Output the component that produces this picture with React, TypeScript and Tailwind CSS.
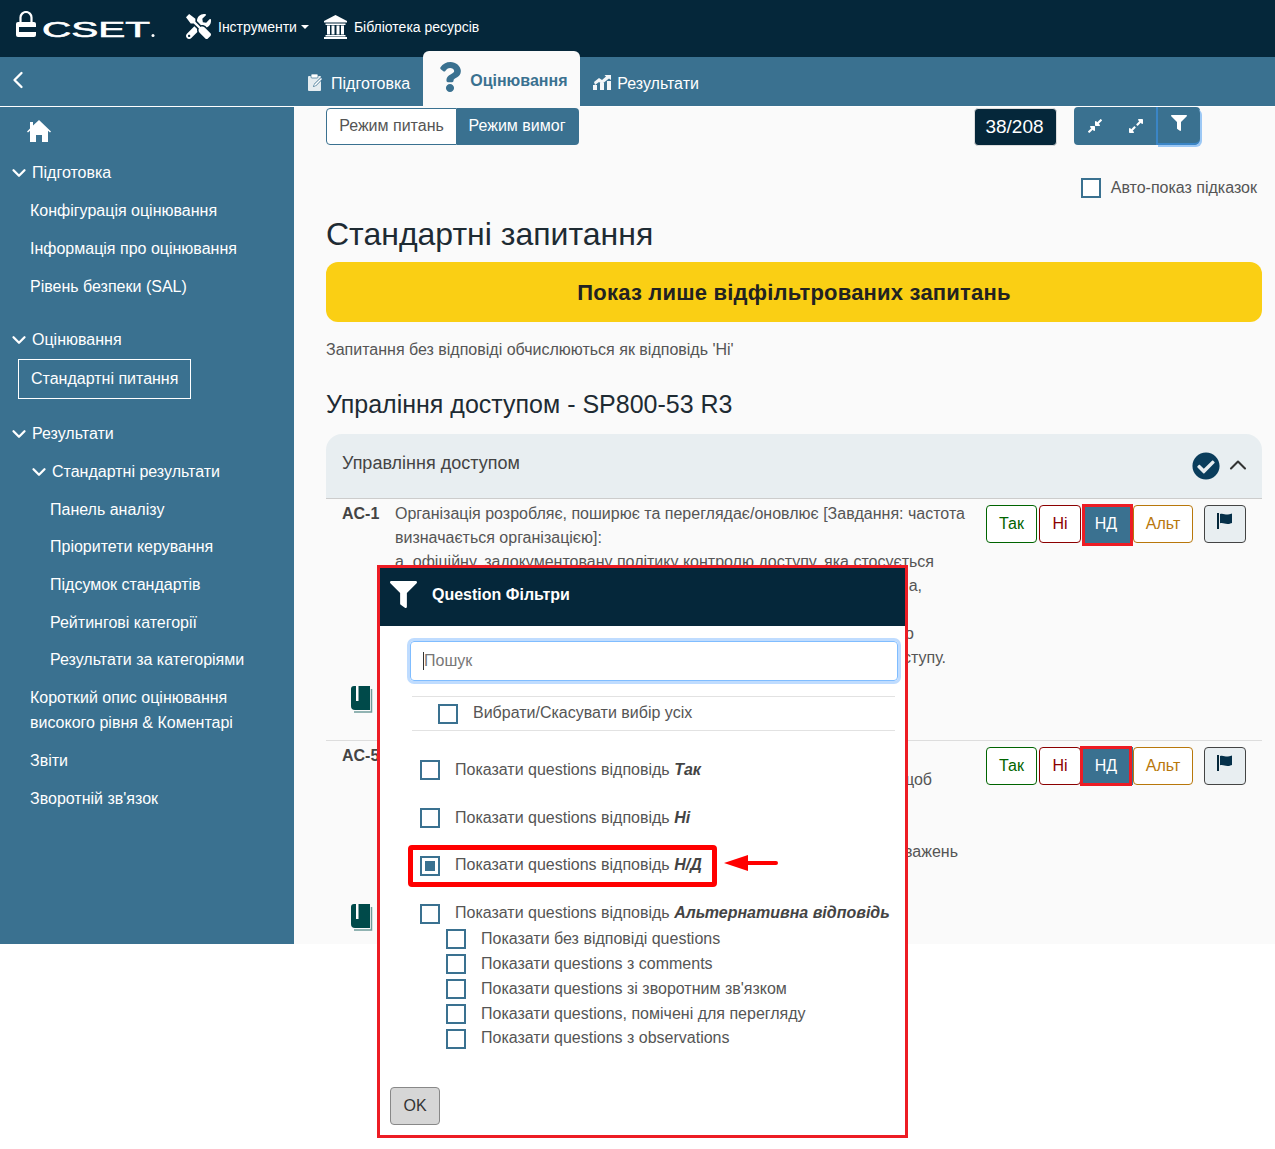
import React from 'react';
import { FaCheckCircle, FaCompressAlt, FaExpandAlt, FaFilter, FaQuestion, FaTools } from 'react-icons/fa';
import { ChevronDown, ChevronLeft, ChevronUp } from 'lucide-react';

const Logo = () => (
  <svg width="146" height="34" viewBox="0 0 146 34" className="shrink-0 mt-[2px]">
    <path d="M5.500 11V6.500a5.500 5.500 0 0 1 11 0V11" fill="none" stroke="#fff" strokeWidth="2.200" />
    <rect x="1" y="11" width="20" height="15" rx="2" fill="#fff" />
    <rect x="4" y="16" width="18" height="5" fill="#05273a" />
    <text x="27" y="26" fontSize="22" fill="#fff" stroke="#fff" strokeWidth="0.6" fontFamily="Liberation Sans" textLength="108" lengthAdjust="spacingAndGlyphs">CSET</text>
    <circle cx="138" cy="24.500" r="1.500" fill="#fff" />
  </svg>
);

const LibraryIcon = () => (
  <svg width="23" height="24" viewBox="0 0 23 24" fill="#fff" className="ml-[15px]">
    <path d="M11.500 0L23 6v1.500H0V6z" />
    <rect x="1.500" y="8.500" width="20" height="1.500" />
    <rect x="3" y="10.500" width="3" height="9" />
    <rect x="7.500" y="10.500" width="3" height="9" />
    <rect x="12.500" y="10.500" width="3" height="9" />
    <rect x="17" y="10.500" width="3" height="9" />
    <rect x="1.500" y="20" width="20" height="1.500" />
    <rect x="0" y="22" width="23" height="2" />
  </svg>
);

const HomeIcon = () => (
  <svg width="24" height="22" viewBox="0 0 24 22" fill="#fff">
    <path d="M12 0L24 11.500l-1 1-2-1.800V22h-6v-7H9v7H3V10.700l-2 1.800-1-1L3 8.500V2h3v3.600z" />
  </svg>
);

const ClipboardIcon = () => (
  <svg width="17" height="18" viewBox="0 0 17 18">
    <rect x="1" y="3" width="13" height="15" rx="1" fill="#e4ecf0" />
    <rect x="4" y="1" width="7" height="4" rx="1" fill="#fff" stroke="#3a7190" strokeWidth="0.7" />
    <path d="M6 14l1-3 7-7 2 2-7 7z" fill="#3a7190" />
    <path d="M7 13l.6-1.800 6.400-6.200 1 1-6.300 6.400z" fill="#fff" />
  </svg>
);

const ResultsIcon = () => (
  <svg width="18" height="16" viewBox="0 0 18 16" fill="#f3f6f8">
    <rect x="0" y="11" width="4" height="5" />
    <rect x="7" y="9" width="4" height="7" />
    <rect x="14" y="7" width="4" height="9" />
    <path d="M1 8l5-4 3 2 4-3.500-1.500-1.500H18v5l-2-1.500-7 5.500-3-2-4 3z" />
  </svg>
);

const BookIcon = () => (
  <svg width="22" height="27" viewBox="0 0 22 27">
    <path d="M20.500 3v23H3" fill="none" stroke="#6f9c9a" strokeWidth="1.500" />
    <path d="M3 0h16v24H4a4 4 0 0 1-4-4V3a3 3 0 0 1 3-3z" fill="#004a4a" />
    <rect x="5" y="0" width="2.500" height="15" fill="#fff" />
  </svg>
);

const FlagIcon = () => (
  <svg width="16" height="16" viewBox="0 0 16 16" className="mb-[6px]">
    <rect x="0" y="0" width="2" height="16" fill="#05273a" />
    <path d="M3 1c3-1 5 .8 8 .5 2-.2 3-.8 4-1v9.500c-1 .3-2.500 1-4 1-3 .2-5-1.500-8-.7z" fill="#05304a" />
  </svg>
);

const Box = ({ checked = false }: { checked?: boolean }) => (
  <span className="w-5 h-5 shrink-0 border-2 border-[#3a7190] bg-white flex items-center justify-center">
    {checked && <span className="w-2.5 h-2.5 bg-[#3a7190]" />}
  </span>
);

const NavItem = ({ label, indent, chevron, height = 'h-[38px]' }: { label: string; indent: string; chevron?: boolean; height?: string }) => (
  <div className={`${height} flex items-center ${indent}`}>
    {chevron && <ChevronDown size={22} strokeWidth={2.500} className="mr-0.5" />}
    <span>{label}</span>
  </div>
);

const Sidebar = () => (
  <aside className="w-[294px] shrink-0 bg-[#3a7190] text-white text-base h-[837px]">
    <div className="h-[47px] pl-[27px] pt-[13px]"><HomeIcon /></div>
    <NavItem label="Підготовка" indent="pl-2" chevron />
    <NavItem label="Конфігурація оцінювання" indent="pl-[30px]" />
    <NavItem label="Інформація про оцінювання" indent="pl-[30px]" />
    <NavItem label="Рівень безпеки (SAL)" indent="pl-[30px]" />
    <div className="mt-[15px]"><NavItem label="Оцінювання" indent="pl-2" chevron /></div>
    <div className="ml-[18px] w-[173px] h-10 border border-white flex items-center pl-3">Стандартні питання</div>
    <div className="mt-[16px]"><NavItem label="Результати" indent="pl-2" chevron /></div>
    <NavItem label="Стандартні результати" indent="pl-[28px]" chevron />
    <NavItem label="Панель аналізу" indent="pl-[50px]" height="h-[37px]" />
    <NavItem label="Пріоритети керування" indent="pl-[50px]" />
    <NavItem label="Підсумок стандартів" indent="pl-[50px]" />
    <NavItem label="Рейтингові категорії" indent="pl-[50px]" height="h-[37px]" />
    <NavItem label="Результати за категоріями" indent="pl-[50px]" />
    <div className="pl-[30px] leading-[25px] pt-[6px] pb-[7px]">Короткий опис оцінювання<br />високого рівня &amp; Коментарі</div>
    <NavItem label="Звіти" indent="pl-[30px]" />
    <NavItem label="Зворотній зв'язок" indent="pl-[30px]" />
  </aside>
);

const Answers = () => (
  <div className="absolute right-[16px] top-[6px] flex items-center text-base">
    <button className="w-[51px] h-[38px] rounded border border-[#006400] text-[#006400] bg-white">Так</button>
    <button className="w-[42px] h-[38px] ml-0.5 rounded border border-[#8b0000] text-[#8b0000] bg-white">Ні</button>
    <span className="relative w-[50px] h-[38px] ml-0.5 pr-1 bg-[#3a7190] text-white flex items-center justify-center">
      НД
    </span>
    <button className="w-[60px] h-[38px] rounded border border-[#b8770b] text-[#b8770b] bg-white">Альт</button>
    <button className="w-[42px] h-[38px] ml-[11px] rounded border border-[#444] bg-[#e8eef1] flex items-center justify-center"><FlagIcon /></button>
  </div>
);

const Check = ({ label, strong, lift = false }: { label: string; strong?: string; lift?: boolean }) => (
  <div className="flex items-center h-5 gap-[15px]">
    <Box />
    <span className={`whitespace-nowrap ${lift ? 'mb-0.5' : ''}`}>{label}{strong && <b className="italic text-[#444]"> {strong}</b>}</span>
  </div>
);

const Modal = () => (
  <div className="absolute left-[377px] top-[565px] w-[531px] h-[573px] border-[3px] border-[#ed1c24] bg-white text-base text-[#555]">
    <div className="h-[58px] bg-[#05273a] flex items-center pl-[10px] text-white font-bold">
      <FaFilter size={27} className="mb-1.5" />
      <span className="ml-[15px] mb-1">Question Фільтри</span>
    </div>
    <div className="mx-[30px] mt-[15px] w-[488px] h-10 rounded border border-[#80bdff] ring-[3px] ring-[#bfdcff] flex items-center pl-3 text-[#777]">
      <span className="w-px h-[18px] bg-[#333]" />Пошук
    </div>
    <div className="ml-[32px] mt-[15px] w-[483px] h-[35px] border-y border-[#e2e2e2] flex items-center pl-[26px]">
      <Box /><span className="ml-[15px] mb-0.5">Вибрати/Скасувати вибір усіх</span>
    </div>
    <div className="ml-[40px] mt-[29px] flex flex-col gap-[28px]">
      <Check label="Показати questions відповідь" strong="Так" />
      <Check label="Показати questions відповідь" strong="Ні" />
      <div className="h-5 flex items-center gap-[15px]">
        <Box checked />
        <span className="whitespace-nowrap mb-0.5">Показати questions відповідь <b className="italic text-[#444]">Н/Д</b></span>
      </div>
      <Check label="Показати questions відповідь" strong="Альтернативна відповідь" lift />
    </div>
    <div className="ml-[66px] mt-[5px] flex flex-col gap-[5px]">
      <Check label="Показати без відповіді questions" />
      <Check label="Показати questions з comments" />
      <Check label="Показати questions зі зворотним зв'язком" />
      <Check label="Показати questions, помічені для перегляду" />
      <Check label="Показати questions з observations" lift />
    </div>
    <button className="ml-[10px] mt-[38px] w-[50px] h-[38px] rounded border border-[#888] bg-[#d6d6d6] text-[#333]">OK</button>
  </div>
);

export default function App() {
  return (
    <div className="relative h-[1149px] bg-white font-['Liberation_Sans',Arial,sans-serif] overflow-hidden">
      <header className="h-[57px] bg-[#05273a] flex items-center text-white text-sm pl-[15px] pb-1">
        <Logo />
        <FaTools size={25} className="ml-[25px]" />
        <span className="ml-[7px]">Інструменти</span>
        <span className="ml-1 border-x-[4px] border-t-[4px] border-x-transparent border-t-white" />
        <LibraryIcon />
        <span className="ml-[7px]">Бібліотека ресурсів</span>
      </header>
      <div className="relative h-[49px] bg-[#3a7190] text-white text-base flex items-center">
        <ChevronLeft size={28} strokeWidth={2} className="ml-[4px] mb-[4px]" />
        <div className="ml-[275px] flex items-center h-full">
          <ClipboardIcon />
          <span className="ml-[7px] mt-1">Підготовка</span>
          <div className="ml-[13px] w-[157px] h-[59px] -mt-[2px] -translate-y-[4px] rounded-t-md bg-[#fafafa] flex items-center text-[#3a7190] font-bold pl-[12px] self-start">
            <FaQuestion size={30} className="mb-2" />
            <span className="ml-[5px]">Оцінювання</span>
          </div>
          <span className="ml-[13px]"><ResultsIcon /></span>
          <span className="ml-[6px] mt-1">Результати</span>
        </div>
      </div>
      <div className="h-px bg-white" />
      <div className="flex h-[837px] overflow-hidden">
        <Sidebar />
        <main className="relative flex-1 bg-[#fafafa] pl-[32px] pr-[13px] text-[#555] text-base">
          <div className="flex items-start h-[70px]">
            <div className="mt-px flex h-[37px]">
              <span className="w-[131px] pb-0.5 flex items-center justify-center border border-[#3a7190] rounded-l bg-white">Режим питань</span>
              <span className="w-[122px] pb-0.5 pr-0.5 flex items-center justify-center bg-[#3a7190] text-white rounded-r">Режим вимог</span>
            </div>
            <div className="ml-[395px] mt-px w-[83px] h-[38px] pr-0.5 rounded bg-[#05273a] border border-[#ddd] text-white text-[19px] flex items-center justify-center">38/208</div>
            <div className="ml-[17px] flex h-[38px] w-[126px] bg-[#3a7190] rounded text-white">
              <span className="w-[42px] flex items-center justify-center"><FaCompressAlt size={16} /></span>
              <span className="w-[40px] flex items-center justify-center"><FaExpandAlt size={16} /></span>
              <span className="w-[44px] flex justify-center pt-2 border-l-2 border-b-2 border-[#3a85c6] rounded-r-md shadow-[2px_2px_0_#9cc8f5]"><FaFilter size={16} /></span>
            </div>
          </div>
          <div className="flex items-center justify-end h-[22px] mr-[5px]">
            <Box /><span className="ml-[10px]">Авто-показ підказок</span>
          </div>
          <h1 className="mt-[15px] text-[32px] leading-[40px] text-[#1e2b33]">Стандартні запитання</h1>
          <div className="mt-[8px] h-[60px] rounded-xl bg-[#facf14] text-[#222] font-bold text-[22px] tracking-[0.2px] flex items-center justify-center">Показ лише відфільтрованих запитань</div>
          <p className="mt-[16px] leading-[24px]">Запитання без відповіді обчислюються як відповідь 'Ні'</p>
          <h2 className="mt-[26px] text-[25px] leading-[32px] text-[#1e2b33]">Упраління доступом - SP800-53 R3</h2>
          <div className="mt-[14px] h-[65px] rounded-t-2xl bg-[#e8eef1] border-b border-[#ccc] flex items-center pl-4 pr-[10px] text-lg text-[#444]">
            <span className="flex-1 pb-[6px]">Управління доступом</span>
            <FaCheckCircle size={28} className="text-[#0a3d5c] mr-[4px]" />
            <ChevronUp size={28} strokeWidth={1.800} className="text-[#333] mb-0.5" />
          </div>
          <section className="relative h-[242px] border-b border-[#ddd] leading-[24px]">
            <b className="absolute left-4 top-[3px] text-[#444]">AC-1</b>
            <Answers />
            <div className="pl-[69px] pt-[3px] whitespace-nowrap">
              <div>Організація розробляє, поширює та переглядає/оновлює [Завдання: частота</div>
              <div>визначається організацією]:</div>
              <div>а. офіційну, задокументовану політику контролю доступу, яка стосується</div>
              <div className="w-[527px] text-right">а,</div>
              <div className="h-6" />
              <div className="w-[519px] text-right">о</div>
              <div className="w-[551px] text-right">ступу.</div>
            </div>
            <div className="ml-[25px] mt-[16px]"><BookIcon /></div>
          </section>
          <section className="relative leading-[24px]">
            <b className="absolute left-4 top-[3px] text-[#444]">AC-5</b>
            <Answers />
            <div className="pl-[69px] pt-[3px] whitespace-nowrap">
              <div className="h-6" />
              <div className="w-[537px] text-right">щоб</div>
              <div className="h-12" />
              <div className="w-[563px] text-right">важень</div>
            </div>
            <div className="ml-[25px] mt-[40px]"><BookIcon /></div>
          </section>
        </main>
      </div>

      <Modal />

      {/* annotations drawn on top of the shot */}
      <div className="absolute left-[1082px] top-[504px] w-[51px] h-[42px] border-[3px] border-[#ed1c24]" />
      <div className="absolute left-[1080px] top-[746px] w-[52px] h-[40px] border-[3px] border-[#ed1c24]" />
      <div className="absolute left-[408px] top-[845px] w-[309px] h-[42px] border-[5px] border-[#f00] rounded-sm" />
      <svg className="absolute left-[724px] top-[855px]" width="55" height="16" viewBox="0 0 55 16">
        <path d="M0 8L24 0V6H52a2 2 0 0 1 0 4H24v6z" fill="#f00" />
      </svg>
    </div>
  );
}
